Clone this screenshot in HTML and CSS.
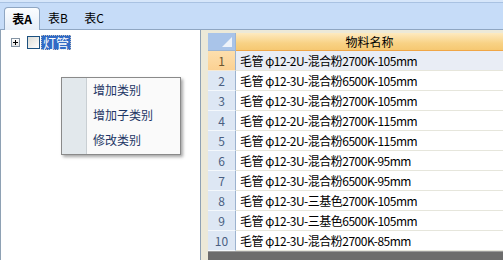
FILE: index.html
```html
<!DOCTYPE html>
<html lang="zh">
<head>
<meta charset="utf-8">
<link rel="stylesheet" href="styles.css">
</head>
<body>
<div class="app">
  <div class="tabs">
    <div class="tab active">表A</div>
    <div class="tab">表B</div>
    <div class="tab">表C</div>
  </div>
  <div class="main">
    <div class="tree">
      <div class="node">
        <span class="expander"></span>
        <span class="check"></span>
        <span class="label">灯管</span>
      </div>
      <div class="menu">
        <div class="menu-item">增加类别</div>
        <div class="menu-item">增加子类别</div>
        <div class="menu-item">修改类别</div>
      </div>
    </div>
    <div class="gridarea">
      <div class="grid">
        <div class="corner"><span class="tri"></span></div>
        <div class="colhead">物料名称</div>
        <div class="rh sel">1</div><div class="cell sel">毛管 φ12-2U-混合粉2700K-105mm</div>
        <div class="rh">2</div><div class="cell">毛管 φ12-3U-混合粉6500K-105mm</div>
        <div class="rh">3</div><div class="cell">毛管 φ12-3U-混合粉2700K-105mm</div>
        <div class="rh">4</div><div class="cell">毛管 φ12-2U-混合粉2700K-115mm</div>
        <div class="rh">5</div><div class="cell">毛管 φ12-2U-混合粉6500K-115mm</div>
        <div class="rh">6</div><div class="cell">毛管 φ12-3U-混合粉2700K-95mm</div>
        <div class="rh">7</div><div class="cell">毛管 φ12-3U-混合粉6500K-95mm</div>
        <div class="rh">8</div><div class="cell">毛管 φ12-3U-三基色2700K-105mm</div>
        <div class="rh">9</div><div class="cell">毛管 φ12-3U-三基色6500K-105mm</div>
        <div class="rh">10</div><div class="cell">毛管 φ12-3U-混合粉2700K-85mm</div>
      </div>
      <div class="hscroll"></div>
    </div>
  </div>
</div>
</body>
</html>
```

FILE: styles.css
```css
* { box-sizing: border-box; }
html, body { margin: 0; padding: 0; }
body {
  width: 503px;
  height: 260px;
  overflow: hidden;
  font-family: "Noto Sans CJK SC", "Liberation Sans", sans-serif;
  font-size: 12px;
  color: #000;
  background: #ece9d8;
}
.app { display: flex; flex-direction: column; height: 260px; }

.tabs {
  height: 30px;
  display: flex;
  align-items: flex-end;
  padding: 0 0 0 4px;
  background: linear-gradient(#d6e6fa 0 2px, #a9c2e2 2px 3px, #c6dcf8 3px);
  border-bottom: 1px solid #8fa6c2;
}
.tab {
  width: 36px;
  height: 23px;
  line-height: 21px;
  text-align: center;
  font-size: 12px;
  margin-bottom: -1px;
}
.tab.active {
  font-weight: bold;
  background: linear-gradient(#fbfdff, #e6eef8);
  border: 1px solid #8fa6c2;
  border-bottom: none;
  border-radius: 4px 4px 0 0;
}

.main { flex: 1; display: flex; min-height: 0; }

.tree {
  width: 201px;
  background: #fff;
  border-left: 1px solid #8ea1b4;
  border-right: 1px solid #8ea1b4;
  position: relative;
  padding: 5px 0 0 10px;
}
.node { display: flex; align-items: center; height: 15px; }
.expander {
  width: 9px; height: 9px;
  border: 1px solid #8494a4;
  background: linear-gradient(#fff, #e4e4e4);
  position: relative;
  margin-right: 7px;
}
.expander::before {
  content: ""; position: absolute; left: 1px; top: 3px; width: 5px; height: 1px; background: #000;
}
.expander::after {
  content: ""; position: absolute; left: 3px; top: 1px; width: 1px; height: 5px; background: #000;
}
.check {
  width: 13px; height: 13px;
  border: 1px solid #1c5180;
  background: linear-gradient(135deg, #dcdcd6, #fdfdfd);
  margin-right: 1px;
}
.label {
  height: 15px;
  line-height: 13px;
  padding: 0 1px;
  background: #316ac5;
  color: #fff;
  border: 1px dotted #c0c0c0;
  font-size: 13px;
}

.menu {
  position: absolute;
  left: 60px;
  top: 47px;
  width: 120px;
  height: 78px;
  border: 1px solid #8a8a8a;
  background: linear-gradient(90deg, #e2e8ec 0 24px, #c9cfd3 24px 25px, #fafafa 25px);
  box-shadow: 2px 2px 3px rgba(0,0,0,0.35);
  padding-left: 31px;
}
.menu-item {
  height: 25px;
  line-height: 24px;
  color: #1e3766;
  font-size: 12px;
}

.gridarea {
  flex: 1;
  display: flex;
  flex-direction: column;
  padding: 3px 0 0 7px;
}
.grid {
  display: grid;
  grid-template-columns: 28px 1fr;
  grid-template-rows: 18px repeat(10, 20px);
  background: #fff;
}
.corner {
  background: #a9c4e9;
  border-right: 1px solid #9db5d2;
  border-bottom: 1px solid #9db5d2;
  position: relative;
}
.tri {
  position: absolute; right: 3px; bottom: 3px;
  width: 0; height: 0;
  border-left: 10px solid transparent;
  border-bottom: 10px solid #eef3fa;
}
.colhead {
  background: linear-gradient(#fdeac0, #f8d285 60%, #f6c872);
  border-bottom: 1px solid #f0a646;
  text-align: center;
  line-height: 17px;
  font-size: 12px;
}
.rh {
  background: #dde7f4;
  border-right: 1px solid #9cb3cf;
  border-bottom: 1px solid #f4f8fc;
  color: #4a5f82;
  text-align: center;
  line-height: 19px;
  font-size: 12px;
}
.rh.sel { background: linear-gradient(#fddfad, #fbd193); border-bottom-color: #f6e9d4; color: #6a5530; }
.cell {
  border-bottom: 1px solid #e6e6dc;
  padding-left: 4px;
  line-height: 19px;
  white-space: nowrap;
  font-size: 12px;
  letter-spacing: -0.5px;
}
.cell.sel { background: #e9edf5; }
.hscroll {
  flex: 1;
  background: #6c6c6c;
  border-top: 1px solid #9a9a9a;
}
```
